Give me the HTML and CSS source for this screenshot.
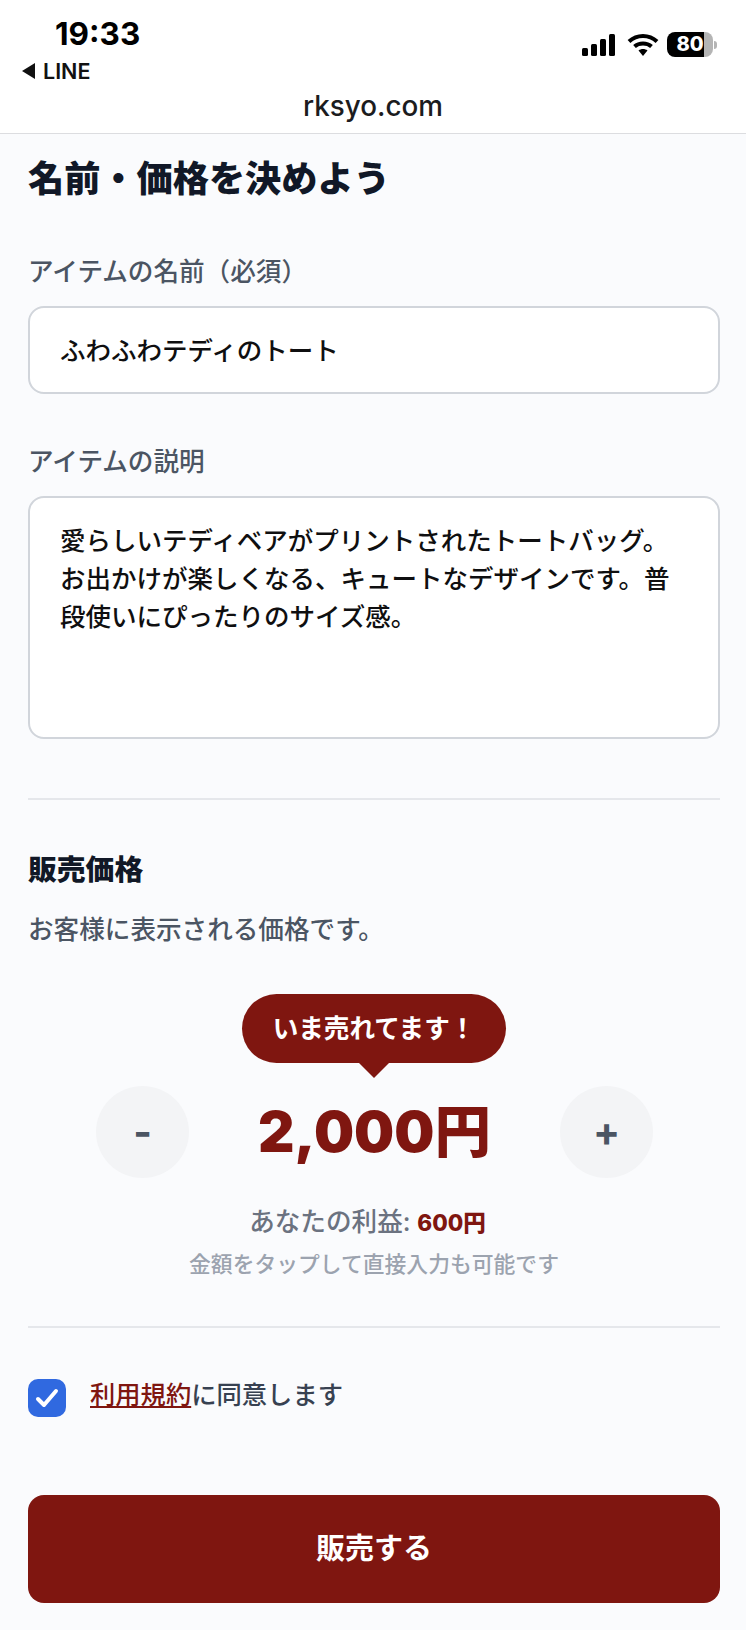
FILE: index.html
```html
<!DOCTYPE html>
<html lang="ja">

<head>
  <meta charset="UTF-8">
  <meta name="viewport" content="width=device-width, initial-scale=1.0">
  <title>rksyo.com</title>
  <link rel="stylesheet" href="styles.css">
</head>

<body>
  <header class="top">
    <div class="status">
      <div class="status-left">
        <div class="time">19:33</div>
        <div class="back"><span class="back-arrow"></span>LINE</div>
      </div>
      <div class="status-right">
        <svg class="signal" width="34" height="24" viewBox="0 0 34 24">
          <rect x="0" y="15" width="6" height="8" rx="1.5" />
          <rect x="9" y="11" width="6" height="12" rx="1.5" />
          <rect x="18" y="6" width="6" height="17" rx="1.5" />
          <rect x="27" y="1" width="6" height="22" rx="1.5" />
        </svg>
        <svg class="wifi" width="32" height="24" viewBox="0 0 32 24">
          <path d="M2 8.5 C10 1 22 1 30 8.5" />
          <path d="M7.5 13.5 C12 9.5 20 9.5 24.500 13.500" />
          <path class="wifi-dot" d="M11.500 17.500 C14 15.500 18 15.500 20.500 17.500 L16 23 Z" />
        </svg>
        <div class="battery">
          <div class="battery-body"><span class="battery-num">80</span></div>
          <div class="battery-cap"></div>
        </div>
      </div>
    </div>
    <div class="url">rksyo.com</div>
  </header>

  <main class="form">
    <h1 class="title">名前・価格を決めよう</h1>

    <label class="label">アイテムの名前（必須）</label>
    <div class="field field-name">ふわふわテディのトート</div>

    <label class="label label-desc">アイテムの説明</label>
    <div class="field field-desc">愛らしいテディベアがプリントされたトートバッグ。お出かけが楽しくなる、キュートなデザインです。普段使いにぴったりのサイズ感。</div>

    <hr class="line line-first">

    <h2 class="price-title">販売価格</h2>
    <p class="price-sub">お客様に表示される価格です。</p>

    <div class="bubble-row">
      <div class="bubble">いま売れてます！</div>
    </div>

    <div class="stepper">
      <div class="step">-</div>
      <div class="price">2,000円</div>
      <div class="step">+</div>
    </div>

    <p class="profit">あなたの利益: <b>600円</b></p>
    <p class="hint">金額をタップして直接入力も可能です</p>

    <hr class="line line-second">

    <div class="agree">
      <div class="check">
        <svg width="24" height="20" viewBox="0 0 24 20">
          <path d="M3 11 L9 17 L21 3" />
        </svg>
      </div>
      <div class="agree-text"><a class="terms">利用規約</a>に同意します</div>
    </div>

    <div class="submit">販売する</div>
  </main>
</body>

</html>
```

FILE: styles.css
```css
html {
  background: #fafbfd;
}

body {
  margin: 0;
  font-family: Inter, "Noto Sans CJK JP", sans-serif;
  color: #111827;
}

/* phone bars */
.top {
  height: 133px;
  background: #fff;
  border-bottom: 1px solid #dcdde0;
}

.status {
  display: flex;
  justify-content: space-between;
  height: 89px;
}

.status-left {
  padding: 16px 0 0 22px;
}

.time {
  margin-left: 33px;
  font-size: 31.500px;
  line-height: 36px;
  font-weight: 700;
  color: #000;
}

.back {
  display: flex;
  align-items: center;
  gap: 8px;
  margin-top: 6px;
  font-size: 21.500px;
  line-height: 26px;
  font-weight: 600;
  color: #111;
}

.back-arrow {
  border-top: 8px solid transparent;
  border-bottom: 8px solid transparent;
  border-right: 13px solid #111;
}

.status-right {
  display: flex;
  align-items: center;
  gap: 8px;
  padding: 27px 29px 0 0;
  height: 35px;
}

.signal {
  fill: #000;
  margin-right: 3px;
}

.wifi {
  fill: none;
  stroke: #000;
  stroke-width: 4px;
}

.wifi-dot {
  fill: #000;
  stroke: none;
}

.battery {
  display: flex;
  align-items: center;
  gap: 1px;
}

.battery-body {
  width: 46px;
  height: 25px;
  border-radius: 8px;
  background: linear-gradient(90deg, #000 80%, #b4b4b4 80%);
  text-align: center;
}

.battery-num {
  font-size: 20px;
  line-height: 25px;
  font-weight: 800;
  color: #fff;
  display: block;
}

.battery-cap {
  width: 3px;
  height: 8px;
  border-radius: 0 3px 3px 0;
  background: #b4b4b4;
}

.url {
  text-align: center;
  font-size: 27.800px;
  line-height: 34px;
  font-weight: 500;
  color: #1c1c1e;
}

/* form */
.form {
  padding: 0 26px 0 28px;
}

.title {
  margin: 0;
  padding-top: 20px;
  font-size: 36.200px;
  line-height: 50px;
  font-weight: 900;
}

.label {
  display: block;
  margin-top: 51px;
  font-size: 25.600px;
  line-height: 34px;
  font-weight: 500;
  color: #4b5563;
}

.label-desc {
  margin-top: 51px;
}

.field {
  box-sizing: border-box;
  margin-top: 17px;
  padding: 24px 30px;
  background: #fff;
  border: 2px solid #d1d5db;
  border-radius: 16px;
  font-size: 25.500px;
  line-height: 38px;
  font-weight: 500;
  color: #0f0f10;
}

.field-name {
  height: 88px;
}

.field-desc {
  height: 243px;
}

.line {
  margin: 0;
  border: 0;
  height: 2px;
  background: #e5e7eb;
}

.line-first {
  margin-top: 59px;
}

.price-title {
  margin: 50px 0 0;
  font-size: 28.800px;
  line-height: 40px;
  font-weight: 900;
}

.price-sub {
  margin: 20px 0 0;
  font-size: 25.600px;
  line-height: 40px;
  font-weight: 500;
  color: #4b5563;
}

.bubble-row {
  display: flex;
  justify-content: center;
  margin-top: 44px;
}

.bubble {
  position: relative;
  width: 264px;
  height: 69px;
  border-radius: 35px;
  background: #7f1610;
  color: #fff;
  text-align: center;
  font-size: 25.600px;
  line-height: 69px;
  font-weight: 700;
}

.bubble::after {
  content: "";
  position: absolute;
  left: 50%;
  bottom: -15px;
  margin-left: -15px;
  border-top: 15px solid #7f1610;
  border-left: 15px solid transparent;
  border-right: 15px solid transparent;
}

.stepper {
  display: flex;
  align-items: center;
  justify-content: space-between;
  margin-top: 23px;
  padding: 0 67px 0 68px;
}

.step {
  width: 93px;
  height: 92px;
  border-radius: 50%;
  background: #f3f4f6;
  color: #4b5563;
  text-align: center;
  font-size: 40px;
  line-height: 92px;
  font-weight: 700;
}

.price {
  font-size: 56.500px;
  line-height: 92px;
  font-weight: 900;
  color: #7f1610;
}

.profit {
  margin: 26px 0 0;
  padding-right: 13px;
  text-align: center;
  font-size: 25.600px;
  line-height: 36px;
  font-weight: 500;
  color: #6b7280;
}

.profit b {
  font-size: 22.500px;
  font-weight: 800;
  color: #7f1610;
}

.hint {
  margin: 8px 0 0;
  text-align: center;
  font-size: 21.800px;
  line-height: 30px;
  font-weight: 500;
  color: #9ca3af;
}

.line-second {
  margin-top: 47px;
}

.agree {
  display: flex;
  gap: 24px;
  margin-top: 51px;
}

.check {
  display: flex;
  align-items: center;
  justify-content: center;
  width: 38px;
  height: 38px;
  border-radius: 10px;
  background: #3069e0;
}

.check svg {
  fill: none;
  stroke: #fff;
  stroke-width: 4px;
  stroke-linecap: round;
  stroke-linejoin: round;
}

.agree-text {
  margin-top: -1px;
  font-size: 25.300px;
  line-height: 34px;
  font-weight: 500;
  color: #374151;
}

.terms {
  color: #7f1610;
  text-decoration: underline;
}

.submit {
  margin-top: 78px;
  height: 108px;
  border-radius: 16px;
  background: #7f1610;
  color: #fff;
  text-align: center;
  font-size: 29px;
  line-height: 108px;
  font-weight: 700;
}
```
